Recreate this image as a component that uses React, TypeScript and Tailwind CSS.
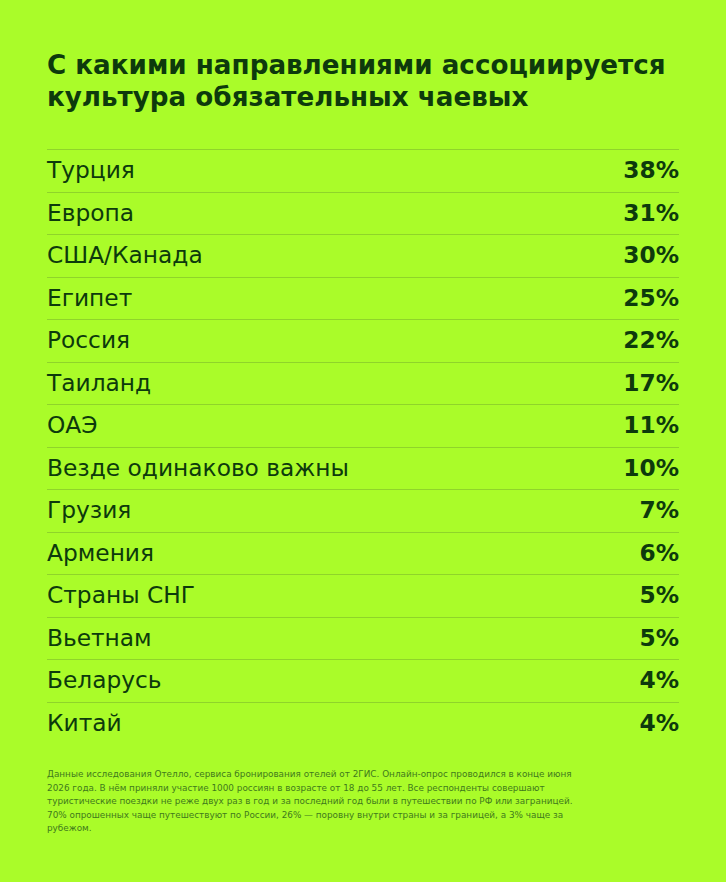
import React from "react";

const rows: [string, string][] = [
  ["Турция", "38%"],
  ["Европа", "31%"],
  ["США/Канада", "30%"],
  ["Египет", "25%"],
  ["Россия", "22%"],
  ["Таиланд", "17%"],
  ["ОАЭ", "11%"],
  ["Везде одинаково важны", "10%"],
  ["Грузия", "7%"],
  ["Армения", "6%"],
  ["Страны СНГ", "5%"],
  ["Вьетнам", "5%"],
  ["Беларусь", "4%"],
  ["Китай", "4%"],
];

export default function App() {
  return (
    <div
      className="w-[726px] h-[882px] bg-[#aafc29] text-[#0d3a0c] px-[47px] pt-[49px]"
      style={{ fontFamily: '"DejaVu Sans", "Noto Sans", sans-serif' }}
    >
      <h1 className="text-[26.2px] font-bold leading-[32px]">
        С какими направлениями ассоциируется
        <br />
        культура обязательных чаевых
      </h1>
      <div className="mt-[36px]">
        {rows.map(([name, pct]) => (
          <div
            key={name}
            className="flex items-center justify-between h-[42.5px] border-t border-[#8fd42a] text-[23.3px]"
          >
            <span>{name}</span>
            <span className="font-bold">{pct}</span>
          </div>
        ))}
      </div>
      <p className="mt-[24px] text-[8.85px] leading-[13.5px] text-[#3f7a1c] w-[530px]">
        Данные исследования Отелло, сервиса бронирования отелей от 2ГИС. Онлайн-опрос проводился в конце июня 2026 года. В нём приняли участие 1000 россиян в возрасте от 18 до 55 лет. Все респонденты совершают туристические поездки не реже двух раз в год и за последний год были в путешествии по РФ или заграницей. 70% опрошенных чаще путешествуют по России, 26% — поровну внутри страны и за границей, а 3% чаще за рубежом.
      </p>
    </div>
  );
}
